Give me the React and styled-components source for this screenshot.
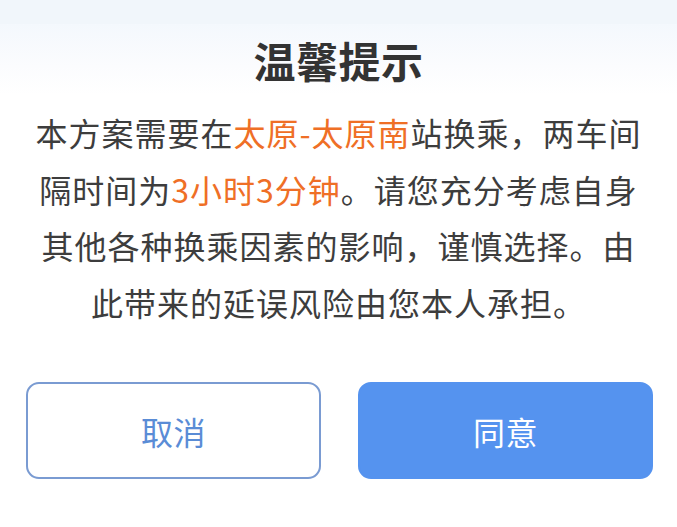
import React from "react";
import styled, { createGlobalStyle } from "styled-components";

const Global = createGlobalStyle`
  html, body { margin: 0; padding: 0; background: #ffffff; }
  body { font-family: "Noto Sans CJK SC", "Noto Sans", sans-serif; }
  * { box-sizing: border-box; }
`;

const Page = styled.div`
  width: 677px;
  height: 527px;
  background: #ffffff;
  display: flex;
  flex-direction: column;
  overflow: hidden;
`;

const TopStrip = styled.div`
  height: 24px;
  background: #f1f6fb;
  flex: none;
`;

const Header = styled.div`
  height: 71px;
  flex: none;
  display: flex;
  align-items: center;
  justify-content: center;
  background: linear-gradient(180deg, #f4f8fd 0%, #fbfcfe 60%, #ffffff 100%);
`;

const Title = styled.h1`
  margin: 0;
  font-size: 42px;
  font-weight: 700;
  color: #333333;
  line-height: 1;
  letter-spacing: 0.5px;
`;

const Message = styled.p`
  margin: 9px auto 0;
  width: 624px;
  text-align: center;
  font-size: 32px;
  line-height: 56.5px;
  letter-spacing: 1px;
  color: #3d3d3d;
  font-weight: 400;
`;

const Accent = styled.span`
  color: #ef6f26;
`;

const Actions = styled.div`
  margin-top: 52px;
  padding: 0 24px 0 26px;
  display: flex;
  gap: 37px;
`;

const Button = styled.button`
  flex: 1;
  height: 97px;
  border-radius: 13px;
  font-family: "Noto Sans CJK SC", "Noto Sans", sans-serif;
  font-size: 32px;
  font-weight: 400;
  letter-spacing: 0.5px;
  cursor: pointer;
  display: flex;
  align-items: center;
  justify-content: center;
  border: 2px solid ${(p) => (p.$primary ? "#5593ef" : "#7a9bd2")};
  background: ${(p) => (p.$primary ? "#5593ef" : "#ffffff")};
  color: ${(p) => (p.$primary ? "#ffffff" : "#5a8cd6")};
`;

export default function App() {
  return (
    <>
      <Global />
      <Page>
        <TopStrip />
        <Header>
          <Title>温馨提示</Title>
        </Header>
        <Message>
          本方案需要在<Accent>太原-太原南</Accent>站换乘，两车间隔时间为
          <Accent>3小时3分钟</Accent>。请您充分考虑自身其他各种换乘因素的影响，谨慎选择。由此带来的延误风险由您本人承担。
        </Message>
        <Actions>
          <Button>取消</Button>
          <Button $primary>同意</Button>
        </Actions>
      </Page>
    </>
  );
}
